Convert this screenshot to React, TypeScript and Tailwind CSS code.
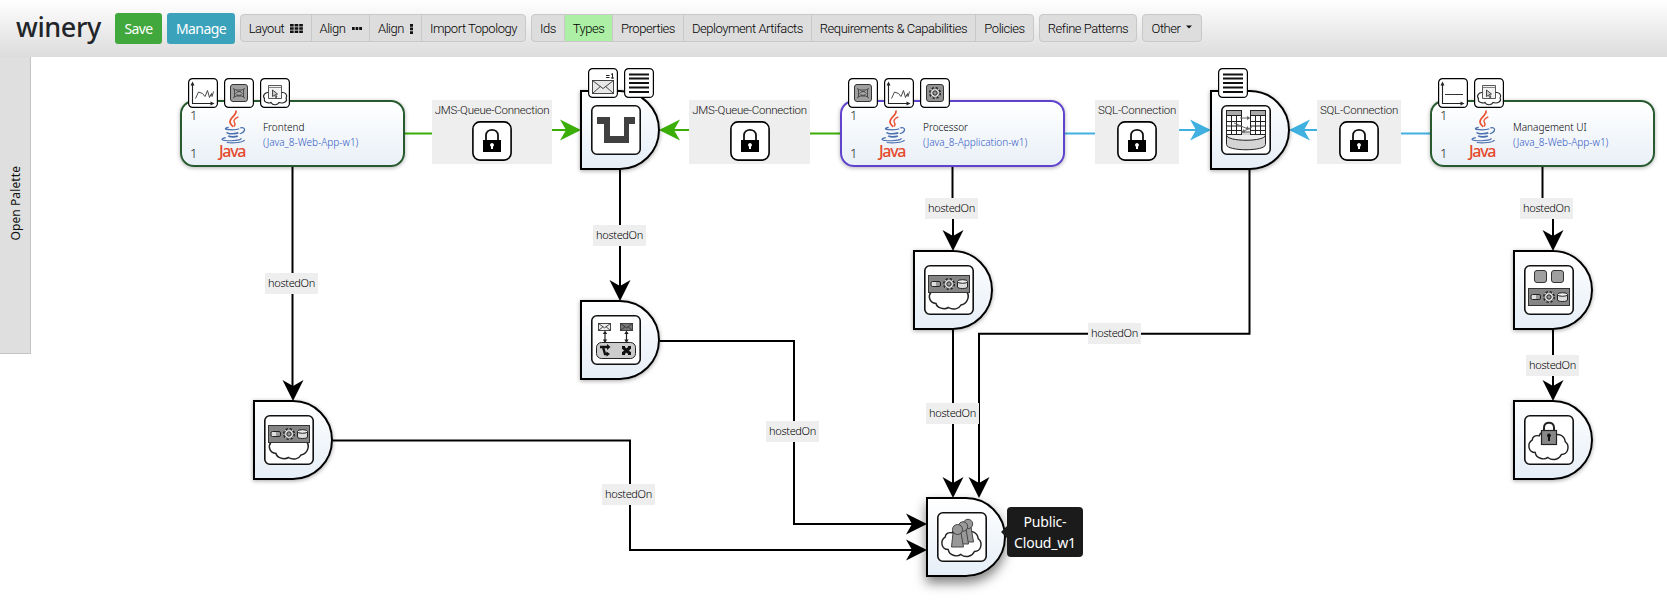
import type { ReactNode } from "react";

/* ---------- small drawings ---------- */

const CLOUD =
  "M6 9 C0 13 2 22 9 22 C10 28 18 30 22 27 C27 31 34 29 36 24 C43 24 45 15 40 11 C39 4 32 2 29 5 C25 -1 15 -1 13 5 C9 4 6 6 6 9 Z";

function Gear({ x, y, s = 1 }: { x: number; y: number; s?: number }) {
  return (
    <g transform={`translate(${x} ${y}) scale(${s})`}>
      <circle r="5.2" fill="#ddd" stroke="#222" strokeWidth="1.6" strokeDasharray="2.4 1.68" />
      <circle r="4.4" fill="#e8e8e8" stroke="#444" strokeWidth="0.7" />
      <circle r="2.2" fill="#999" stroke="#222" strokeWidth="1" />
    </g>
  );
}

function Bar({ y }: { y: number }) {
  return (
    <g>
      <rect x="4.5" y={y} width="41" height="17" fill="#858585" stroke="#333" />
      <rect x="7" y={y + 6} width="9.5" height="5" rx="1.5" fill="#ddd" stroke="#222" />
      <path d={`M13 ${y + 6}v5M15 ${y + 6}v5`} stroke="#333" strokeWidth="0.8" />
      <Gear x={25} y={y + 8.5} />
      <path d={`M33.5 ${y + 6}v5.5c0 2 10 2 10 0v-5.5`} fill="#ddd" stroke="#222" />
      <ellipse cx="38.5" cy={y + 6} rx="5" ry="1.8" fill="#eee" stroke="#222" />
    </g>
  );
}

function Envelope({ x, y, w, h, fill }: { x: number; y: number; w: number; h: number; fill: string }) {
  return (
    <g fill={fill} stroke="#333" strokeWidth="0.9">
      <rect x={x} y={y} width={w} height={h} />
      <path
        d={`M${x} ${y}L${x + w / 2} ${y + h * 0.62}L${x + w} ${y}M${x} ${y + h}L${x + w * 0.38} ${y + h * 0.45}M${x + w} ${y + h}L${x + w * 0.62} ${y + h * 0.45}`}
        fill="none"
      />
    </g>
  );
}

function TableGrid({ x }: { x: number }) {
  return (
    <g stroke="#222" strokeWidth="1">
      <rect x={x} y="5.5" width="15" height="24" fill="#fff" />
      <rect x={x} y="5.5" width="15" height="5" fill="#aaa" />
      <path d={`M${x} 16.5h15M${x} 21h15M${x} 25.5h15M${x + 5} 10.5v19M${x + 10} 10.5v19`} />
    </g>
  );
}

const nodeIcons: Record<string, ReactNode> = {
  queue: <path d="M6 12h13v19h14V12h11v7h-6v19H13V19H6Z" fill="#404040" />,
  database: (
    <g fill="none" stroke="#222">
      <path d="M5.5 26v13.5c0 7 39 7 39 0V26" fill="#d4d4d4" />
      <path d="M5.5 30c0 7 39 7 39 0" fill="#eee" />
      <TableGrid x={5.5} />
      <TableGrid x={29.5} />
      <path d="M19 13h9M13 18l14 6M31 22l-10 5M20 27h10" stroke="#666" />
      <path d="M26 11l3.500 2-3.500 2zM26 21l3 3.500-4 0zM23 24l-3 3.500 4 0z" fill="#666" stroke="none" />
    </g>
  ),
  middleware: (
    <g>
      <Envelope x={7.5} y={8.5} w={12} h={7} fill="#eee" />
      <Envelope x={29.5} y={8.5} w={12} h={7} fill="#777" />
      <path d="M14 18v9M35.500 18v9" stroke="#222" strokeWidth="1.2" />
      <path d="M14 15.500l2.200 3.500h-4.400zM14 28l2.200-3.500h-4.400zM35.500 15.500l2.200 3.500h-4.400zM35.500 28l2.200-3.500h-4.400z" fill="#222" />
      <rect x="5.500" y="27.500" width="39" height="16" rx="5" fill="#ccc" stroke="#222" />
      <path d="M9 32h8M12 32l2 7h3" stroke="#111" strokeWidth="2.400" fill="none" />
      <path d="M16 29l3.500 3-3.500 3zM15.500 36.500l3.500 2.500-3.500 2.500z" fill="#111" />
      <path d="M32 32.500l7 6M39 32.500l-7 6" stroke="#111" strokeWidth="3" />
      <path d="M31 31h3v3h-3zM37 31h3v3h-3zM31 37h3v3h-3zM37 37h3v3h-3z" fill="#111" />
    </g>
  ),
  platform: (
    <g>
      <path
        d="M7 27C4 31 5 38 12 38.500C13 43 20 45 24.500 42.500C29 45.500 35 44 37 40C43 39 46 32 43 27Z"
        fill="#fff"
        stroke="#222"
        strokeWidth="1.500"
      />
      <Bar y={10.5} />
    </g>
  ),
  cluster: (
    <g>
      <rect x="10.500" y="5.500" width="12" height="12" rx="2.500" fill="#a0a0a0" stroke="#333" />
      <rect x="27.500" y="5.500" width="12" height="12" rx="2.500" fill="#a0a0a0" stroke="#333" />
      <Bar y={23.5} />
    </g>
  ),
  privateCloud: (
    <g>
      <path d={CLOUD} transform="translate(2.500 16) scale(.97 .98)" fill="#fff" stroke="#222" strokeWidth="1.500" />
      <path d="M20 16V12.500C20 6 30 6 30 12.500V16" fill="none" stroke="#222" strokeWidth="2" />
      <rect x="17.500" y="15.500" width="15" height="14" fill="#888" stroke="#222" strokeWidth="1.200" />
      <circle cx="25" cy="20.500" r="1.900" fill="#111" />
      <path d="M24 21h2v5h-2z" fill="#111" />
    </g>
  ),
  publicCloud: (
    <g>
      <path d={CLOUD} transform="translate(2.500 16) scale(.97 .98)" fill="#fff" stroke="#222" strokeWidth="1.500" />
      <g fill="#999" stroke="#444" strokeWidth="1">
        <path d="M28 15h6l2.500 15h-9z" />
        <circle cx="31" cy="12" r="4.700" />
        <path d="M22 17h7l2.500 15h-11z" />
        <circle cx="26" cy="14.500" r="4.700" />
        <path d="M16 21h8l2.500 14h-12z" />
        <circle cx="20.500" cy="17.500" r="5" />
      </g>
    </g>
  ),
};

const axes = (
  <g>
    <path d="M4.500 6v19.500H24" fill="none" stroke="#222" strokeWidth="1.100" />
    <path d="M4.500 3.500l2 4h-4zM26.500 25.500l-4-2v4z" fill="#222" />
  </g>
);

const badgeIcons: Record<string, ReactNode> = {
  chart: (
    <g>
      {axes}
      <path d="M7.500 20.500l3-6.500 4 1.500 2.500 3 2.500-6 2 7 2-4 .5 3 1.500-5" fill="none" stroke="#333" strokeWidth="0.900" />
    </g>
  ),
  flat: (
    <g>
      {axes}
      <path d="M7 16.500h18" stroke="#333" />
    </g>
  ),
  component: (
    <g>
      <rect x="6.500" y="6.500" width="17" height="17" rx="2.500" fill="#a0a0a0" stroke="#333" />
      <path d="M9 10.500l3 1.500h6l3-1.500M9 20l3-2h6l3 2M10.500 11.500v7.500M19.500 11.500v7.500" fill="none" stroke="#333" strokeWidth="0.800" />
      <path d="M11.500 15.500l2.500-1.800h2l2.500 1.800-2.500 1.800h-2z" fill="#eee" stroke="#333" strokeWidth="0.700" />
      <path d="M14 13v4.500M16 13v4.500" stroke="#222" strokeWidth="0.700" />
    </g>
  ),
  gear: (
    <g>
      <rect x="6.500" y="6.500" width="17" height="17" rx="2.500" fill="#929292" stroke="#333" />
      <Gear x={15} y={15} />
    </g>
  ),
  webapp: (
    <g>
      <path d="M8.500 14.500C5 14 2 18 4.500 20.500C3 25 10 25.500 11 24.500C13 28 18 27 19 24.500C24 26 28 23 26 20C28 17 25 14 22 14.500Z" fill="#fff" stroke="#222" strokeWidth="1.100" />
      <path d="M8.500 7.500h13v13h-13z" fill="#f2f2f2" stroke="#444" strokeWidth="0.900" />
      <path d="M8.500 9.500h13" stroke="#777" strokeWidth="0.900" />
      <path d="M12.500 12l5 4-2 .5 1.500 2.500-1.200.7-1.300-2.500-2 1.300z" fill="#ccc" stroke="#222" strokeWidth="0.800" />
    </g>
  ),
  message: (
    <g>
      <Envelope x={4.5} y={12.5} w={21} h={13} fill="#e8e8e8" />
      <path d="M18 7.500h3.500M18 9.500h3.500M23 6.500l1.500-1v5M23 10h3" fill="none" stroke="#222" strokeWidth="1" />
    </g>
  ),
  lines: <path d="M5 6.500h20M5 10.500h20M5 15h20M5 19.500h20M5 24h20" stroke="#111" strokeWidth="2" />,
};

function JavaLogo() {
  return (
    <svg className="block" width="29" height="36" viewBox="0 0 30 36" fill="none">
      <path d="M17.500 1C19 6 10 8.500 11.500 13.500C12 15.500 14 16.500 14.500 18" stroke="#e8502f" strokeWidth="1.800" />
      <path d="M20 7.500C16 9.500 14.500 11 16 13.500C17 15 16.500 16.500 15.500 17.500" stroke="#e8502f" strokeWidth="1.400" />
      <path d="M10 18.500C5 19.500 6 20.500 11 20.800C16 21 20 20.300 21 19.800M22 19C28 17.500 28 23 21.500 25" stroke="#4a6fae" strokeWidth="1.300" />
      <path d="M8 23.500C9 25.500 18 25.200 20 24M9.500 27C11 28.700 17 28.300 19.500 27.200" stroke="#4a6fae" strokeWidth="1.700" />
      <path d="M7 29C0 30.500 3 32 12 32.200C20 32.300 24 30.800 22.500 29.500M8 34C15 35 24 34 26.500 31.500" stroke="#4a6fae" strokeWidth="1.200" />
    </svg>
  );
}

/* ---------- canvas elements ---------- */

function Badges({ icons }: { icons: string[] }) {
  return (
    <div className="absolute -top-6 left-1.5 z-10 flex gap-1.5">
      {icons.map((name) => (
        <svg key={name} width="30" height="30" viewBox="0 0 30 30">
          <rect x="0.600" y="0.600" width="28.800" height="28.800" rx="4" fill="#fff" stroke="#000" strokeWidth="1.200" />
          {badgeIcons[name]}
        </svg>
      ))}
    </div>
  );
}

type CardProps = { x: number; title: string; type: string; border: string; icons: string[] };

function Card({ x, title, type, border, icons }: CardProps) {
  return (
    <div
      className={`absolute top-[100px] flex h-[67px] w-[225px] rounded-[14px] border-2 bg-gradient-to-b from-white to-[#e9f0f7] font-['Noto_Sans'] shadow-[0_1px_4px_rgba(0,0,0,0.3)] ${border}`}
      style={{ left: x }}
    >
      <Badges icons={icons} />
      <div className="flex w-[37px] flex-col justify-between pb-[3px] pl-2 pt-1 text-[13px] font-light leading-[18px] text-[#222]">
        <span>1</span>
        <span>1</span>
      </div>
      <div className="w-11 pt-[7px]">
        <JavaLogo />
        <div className="-mt-[3px] text-[16px] font-medium leading-[18px] tracking-[-1.3px] text-[#e5492d]">Java</div>
      </div>
      <div className="whitespace-nowrap pt-[18px] text-[10px] leading-[15px]">
        <div className="font-light text-black">{title}</div>
        <div className="font-light text-[#2f55c4]">{type}</div>
      </div>
    </div>
  );
}

function Node({ x, y, icon, badges, active }: { x: number; y: number; icon: string; badges?: string[]; active?: boolean }) {
  return (
    <div
      className={`absolute flex h-20 w-20 items-center rounded-r-[40px] border-2 border-black bg-gradient-to-b from-white to-[#e6eef7] pl-[9px] ${
        active ? "shadow-[0_6px_12px_rgba(0,0,0,0.5)]" : "shadow-[0_1px_4px_rgba(0,0,0,0.35)]"
      }`}
      style={{ left: x, top: y }}
    >
      {badges && <Badges icons={badges} />}
      <svg className="block" width="50" height="50" viewBox="0 0 50 50">
        <rect x="0.800" y="0.800" width="48.400" height="48.400" rx="5" fill="#fff" stroke="#111" strokeWidth="1.600" />
        {nodeIcons[icon]}
      </svg>
    </div>
  );
}

function Relation({ x, w, label }: { x: number; w: number; label: string }) {
  return (
    <div className="absolute top-[100px] flex h-16 flex-col items-center bg-[#eeeeee] pt-0.5" style={{ left: x, width: w }}>
      <div className="whitespace-nowrap font-['Roboto'] text-[11.500px] font-light leading-[17px] tracking-[-0.24px] text-[#111]">{label}</div>
      <svg className="mt-0.5 block" width="40" height="40" viewBox="0 0 40 40">
        <rect x="0.900" y="0.900" width="38.200" height="38.200" rx="7" fill="#fff" stroke="#000" strokeWidth="1.600" />
        <path d="M14 20v-5.500c0-7.500 12-7.500 12 0V20" fill="none" stroke="#111" strokeWidth="1.800" />
        <rect x="11" y="19" width="18" height="12" fill="#000" />
        <path d="M20 22a2 2 0 0 1 1 3.700V28h-2v-2.300A2 2 0 0 1 20 22z" fill="#fff" />
      </svg>
    </div>
  );
}

function Hosted({ x, y }: { x: number; y: number }) {
  return (
    <div
      className="absolute flex h-[21px] w-[53px] items-center justify-center bg-[#eeeeee] font-['Noto_Sans'] text-[11px] font-light tracking-[-0.35px] text-black"
      style={{ left: x, top: y }}
    >
      hostedOn
    </div>
  );
}

function Arrow({ x, y, dir, color = "#000" }: { x: number; y: number; dir: number; color?: string }) {
  return <path d="M0 0L-21 10.500L-15 0L-21 -10.500Z" fill={color} transform={`translate(${x} ${y}) rotate(${dir})`} />;
}

function Edges() {
  return (
    <svg className="absolute left-0 top-0" width="1667" height="611" fill="none" strokeWidth="2">
      <g stroke="#3aae06">
        <path d="M405 133.500H432M552 130H568M672 130H690M810 133.500H840" />
      </g>
      <g stroke="#3fb0df">
        <path d="M1065 133.500H1095M1179 130H1198M1302 130H1318M1401 133.500H1430" />
      </g>
      <g stroke="#000">
        <path d="M292.500 167V388M620 170V288M952.500 167V198M953 215V240M953 330V486M1249.500 170V333.700H979V486M1542.500 167V198M1553 215V240M1553 330V390" />
        <path d="M660 341H794V524H915M333 440.500H630V550H915" />
      </g>
      <Arrow x={581} y={130} dir={0} color="#3aae06" />
      <Arrow x={659} y={130} dir={180} color="#3aae06" />
      <Arrow x={1211} y={130} dir={0} color="#3fb0df" />
      <Arrow x={1289} y={130} dir={180} color="#3fb0df" />
      <Arrow x={293} y={401} dir={90} />
      <Arrow x={620} y={301} dir={90} />
      <Arrow x={953} y={251} dir={90} />
      <Arrow x={953} y={498} dir={90} />
      <Arrow x={979} y={498} dir={90} />
      <Arrow x={1553} y={251} dir={90} />
      <Arrow x={1553} y={401} dir={90} />
      <Arrow x={927} y={524} dir={0} />
      <Arrow x={927} y={550} dir={0} />
    </svg>
  );
}

/* ---------- toolbar ---------- */

function Group({ children }: { children: ReactNode }) {
  return <div className="flex h-7 divide-x divide-[#c8c8c8] overflow-hidden rounded-[4px] border border-[#c8c8c8] bg-[#dddddd]">{children}</div>;
}

function Tool({ children, className }: { children: ReactNode; className: string }) {
  return (
    <button
      className={`flex shrink-0 items-center justify-center whitespace-nowrap pt-px font-['Roboto'] text-[13px] font-light tracking-[-0.46px] text-black ${className}`}
    >
      {children}
    </button>
  );
}

function Toolbar() {
  return (
    <header className="flex h-[57px] items-center gap-[5px] bg-gradient-to-b from-white to-[#dcdcdc] pb-px pl-4">
      <h1 className="w-[94px] pb-1 font-['Noto_Sans'] text-[27px] font-medium leading-none tracking-[-0.4px] text-[#212529]">winery</h1>
      <button className="h-[31px] w-[47px] rounded-[3px] bg-[#41a83e] font-['Noto_Sans'] text-[14px] tracking-[-0.6px] text-white">Save</button>
      <button className="h-[31px] w-[68px] rounded-[3px] bg-[#3ba2bb] font-['Noto_Sans'] text-[14px] tracking-[-0.6px] text-white">Manage</button>
      <Group>
        <Tool className="w-[71px] gap-1.5">
          Layout
          <svg width="13" height="9" viewBox="0 0 13 9" fill="#111">
            <path d="M0 0h3.700v2.500H0zM4.600 0h3.700v2.500H4.600zM9.200 0h3.700v2.500H9.200zM0 3.300h3.700v2.500H0zM4.600 3.300h3.700v2.500H4.600zM9.200 3.300h3.700v2.500H9.200zM0 6.500h3.700V9H0zM4.600 6.500h3.700V9H4.600zM9.200 6.500h3.700V9H9.200z" />
          </svg>
        </Tool>
        <Tool className="w-[58px] gap-1.5">
          Align
          <svg width="10" height="3" fill="#111">
            <path d="M0 0h2.700v3H0zM3.600 0h2.700v3H3.600zM7.200 0H10v3H7.200z" />
          </svg>
        </Tool>
        <Tool className="w-[52px] gap-1.5">
          Align
          <svg width="3" height="10" fill="#111">
            <path d="M0 0v2.700h3V0zM0 3.600v2.700h3V3.600zM0 7.200V10h3V7.200z" />
          </svg>
        </Tool>
        <Tool className="w-[103px]">Import Topology</Tool>
      </Group>
      <Group>
        <Tool className="w-[33px]">Ids</Tool>
        <Tool className="w-[48px] bg-[#adf0a5]">Types</Tool>
        <Tool className="w-[71px]">Properties</Tool>
        <Tool className="w-[128px]">Deployment Artifacts</Tool>
        <Tool className="w-[164px]">Requirements &amp; Capabilities</Tool>
        <Tool className="w-[57px]">Policies</Tool>
      </Group>
      <Group>
        <Tool className="w-[96px]">Refine Patterns</Tool>
      </Group>
      <Group>
        <Tool className="w-[58px] gap-1.5">
          Other
          <svg className="-mt-1" width="6" height="4" fill="#111">
            <path d="M0 0.500h6L3 3.500z" />
          </svg>
        </Tool>
      </Group>
    </header>
  );
}

export default function App() {
  return (
    <div className="relative h-[611px] w-[1667px] overflow-hidden bg-white">
      <Toolbar />
      <aside className="flex h-[297px] w-[31px] items-center justify-center border-b border-r border-[#c4c4c4] bg-[#dfdfdf] pl-0.5 pb-1">
        <span className="rotate-180 whitespace-nowrap font-['Noto_Sans'] text-[12px] tracking-[0.1px] text-[#111] [writing-mode:vertical-rl]">Open Palette</span>
      </aside>
      <main className="absolute inset-0">
        <Edges />
        <Card x={180} title="Frontend" type="(Java_8-Web-App-w1)" border="border-[#285a2f]" icons={["chart", "component", "webapp"]} />
        <Card x={840} title="Processor" type="(Java_8-Application-w1)" border="border-[#6043cc]" icons={["component", "chart", "gear"]} />
        <Card x={1430} title="Management UI" type="(Java_8-Web-App-w1)" border="border-[#285a2f]" icons={["flat", "webapp"]} />
        <Node x={580} y={90} icon="queue" badges={["message", "lines"]} />
        <Node x={1210} y={90} icon="database" badges={["lines"]} />
        <Node x={580} y={300} icon="middleware" />
        <Node x={253} y={400} icon="platform" />
        <Node x={913} y={250} icon="platform" />
        <Node x={926} y={497} icon="publicCloud" active />
        <Node x={1513} y={250} icon="cluster" />
        <Node x={1513} y={400} icon="privateCloud" />
        <Relation x={432} w={120} label="JMS-Queue-Connection" />
        <Relation x={689} w={121} label="JMS-Queue-Connection" />
        <Relation x={1095} w={84} label="SQL-Connection" />
        <Relation x={1317} w={84} label="SQL-Connection" />
        <Hosted x={265} y={273} />
        <Hosted x={593} y={225} />
        <Hosted x={766} y={421} />
        <Hosted x={602} y={484} />
        <Hosted x={925} y={198} />
        <Hosted x={926} y={403} />
        <Hosted x={1088} y={323} />
        <Hosted x={1520} y={198} />
        <Hosted x={1526} y={355} />
        <div className="absolute left-[1007px] top-[507px] flex h-[50px] w-[76px] items-center justify-center rounded-[4px] bg-[#1b1b1b] text-center font-['Noto_Sans'] text-[14px] leading-[21px] tracking-[-0.2px] text-white">
          <span className="absolute -left-1.5 top-[19px] h-0 w-0 border-y-[6px] border-r-[6px] border-y-transparent border-r-[#1b1b1b]" />
          Public-
          <br />
          Cloud_w1
        </div>
      </main>
    </div>
  );
}
